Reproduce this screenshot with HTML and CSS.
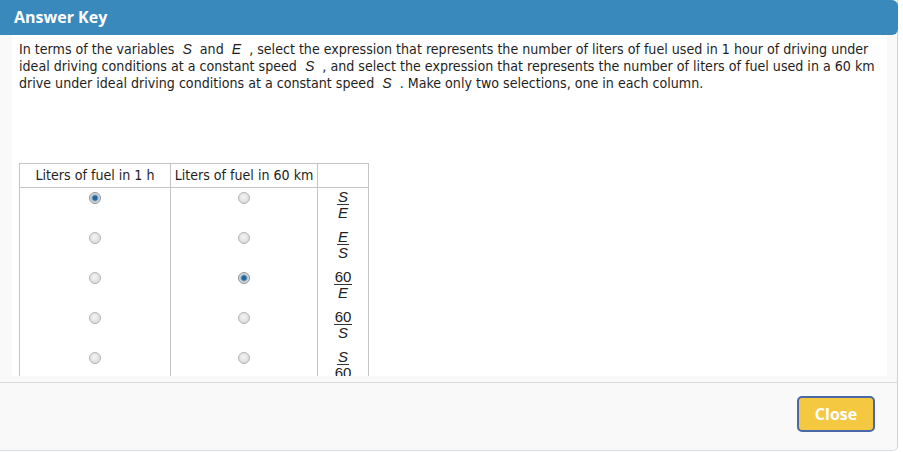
FILE: index.html
```html
<!DOCTYPE html>
<html>
<head>
<meta charset="utf-8">
<link rel="stylesheet" href="styles.css">
</head>
<body>
<div class="modal">
  <div class="modal-header">Answer Key</div>
  <div class="modal-body">
    <div class="scroll">
      <p class="prompt">In terms of the variables <span class="var">S</span> and <span class="var">E</span> , select the expression that represents the number of liters of fuel used in 1 hour of driving under ideal driving conditions at a constant speed <span class="var">S</span> , and select the expression that represents the number of liters of fuel used in a 60 km drive under ideal driving conditions at a constant speed <span class="var">S</span> . Make only two selections, one in each column.</p>
      <table class="grid">
        <thead>
          <tr><th class="c1">Liters of fuel in 1 h</th><th class="c2">Liters of fuel in 60 km</th><th class="c3"></th></tr>
        </thead>
        <tbody>
          <tr><td><input type="radio" class="radio" name="a" checked></td><td><input type="radio" class="radio" name="b"></td><td class="expr"><span class="frac"><span class="num">S</span><span class="den">E</span></span></td></tr>
          <tr><td><input type="radio" class="radio" name="a"></td><td><input type="radio" class="radio" name="b"></td><td class="expr"><span class="frac"><span class="num">E</span><span class="den">S</span></span></td></tr>
          <tr><td><input type="radio" class="radio" name="a"></td><td><input type="radio" class="radio" name="b" checked></td><td class="expr"><span class="frac"><span class="num up">60</span><span class="den">E</span></span></td></tr>
          <tr><td><input type="radio" class="radio" name="a"></td><td><input type="radio" class="radio" name="b"></td><td class="expr"><span class="frac"><span class="num up">60</span><span class="den">S</span></span></td></tr>
          <tr><td><input type="radio" class="radio" name="a"></td><td><input type="radio" class="radio" name="b"></td><td class="expr"><span class="frac"><span class="num">S</span><span class="den up">60</span></span></td></tr>
        </tbody>
      </table>
    </div>
  </div>
  <div class="modal-footer">
    <button class="btn-close">Close</button>
  </div>
</div>
</body>
</html>
```
FILE: styles.css
```css
html, body {
  margin: 0;
  padding: 0;
  background: #ffffff;
}
body {
  width: 903px;
  height: 452px;
  overflow: hidden;
  font-family: "DejaVu Sans Condensed", "DejaVu Sans", sans-serif;
}
.modal {
  width: 898px;
  height: 451px;
  border-right: 1px solid #c8d3de;
  border-bottom: 1px solid #d6dde4;
  border-bottom-right-radius: 5px;
  background: #f9f9f9;
  display: flex;
  flex-direction: column;
  box-sizing: border-box;
}
.modal-header {
  height: 35px;
  background: #3a89bd;
  color: #ffffff;
  font-family: "Open Sans", sans-serif;
  font-weight: bold;
  font-size: 16px;
  line-height: 35px;
  padding-left: 14px;
  border-radius: 0 6px 6px 0;
  margin-right: -1px;
  box-sizing: border-box;
}
.modal-body {
  height: 348px;
  padding: 0 10px 0 12px;
  border-bottom: 1px solid #dcdcdc;
  box-sizing: border-box;
}
.scroll {
  background: #ffffff;
  height: 341px;
  overflow: hidden;
  padding: 6px 0 0 7px;
  box-sizing: border-box;
}
.prompt {
  margin: 0;
  font-size: 14.1px;
  line-height: 17px;
  color: #1e1e1e;
  width: 860px;
}
.var {
  font-style: italic;
  font-family: "Liberation Sans", sans-serif;
  margin: 0 4px;
}
.grid {
  margin-top: 71px;
  border-collapse: collapse;
  border: 1px solid #444;
  font-size: 14.1px;
  color: #1e1e1e;
}
.grid th {
  font-weight: normal;
  height: 23px;
  padding: 0 3px;
  line-height: 22px;
  border: 1px solid #c4c4c4;
  white-space: nowrap;
  text-align: center;
  vertical-align: top;
}
.grid th.c1 { width: 144px; }
.grid th.c2 { width: 140px; }
.grid th.c3 { width: 44px; }
.grid td {
  height: 40px;
  padding: 0;
  border-left: 1px solid #c4c4c4;
  border-right: 1px solid #c4c4c4;
  text-align: center;
  vertical-align: top;
}
.radio {
  appearance: none;
  -webkit-appearance: none;
  width: 12px;
  height: 12px;
  margin: 4px 0 0 0;
  border-radius: 50%;
  border: 1px solid #b4b4b4;
  background: radial-gradient(circle at 45% 40%, #f4f4f4 0%, #e2e2e2 55%, #cdcdcd 100%);
  box-sizing: border-box;
  display: inline-block;
}
.radio:checked {
  background: radial-gradient(circle, #1d5a8c 0%, #2b6da3 30%, #8fb3cf 45%, #dcdcdc 60%, #c4c4c4 100%);
  border-color: #939393;
}
.expr {
  vertical-align: top;
}
.frac {
  display: inline-flex;
  flex-direction: column;
  align-items: center;
  font-family: "Liberation Sans", sans-serif;
  font-style: italic;
  font-size: 15px;
  line-height: 13px;
  margin-top: 2px;
  color: #222;
}
.frac .num {
  border-bottom: 1px solid #333;
  padding: 0 1px 1px;
}
.frac .den {
  padding-top: 1px;
}
.frac .up {
  font-style: normal;
}
.modal-footer {
  flex: 1;
  display: flex;
  justify-content: flex-end;
  align-items: flex-start;
  padding: 13px 22px 0 0;
}
.btn-close {
  width: 78px;
  height: 36px;
  background: #f5c842;
  border: 2px solid #4a68a6;
  border-radius: 5px;
  color: #ffffff;
  font-family: "Open Sans", sans-serif;
  font-weight: bold;
  font-size: 16px;
  padding: 0;
}
```
